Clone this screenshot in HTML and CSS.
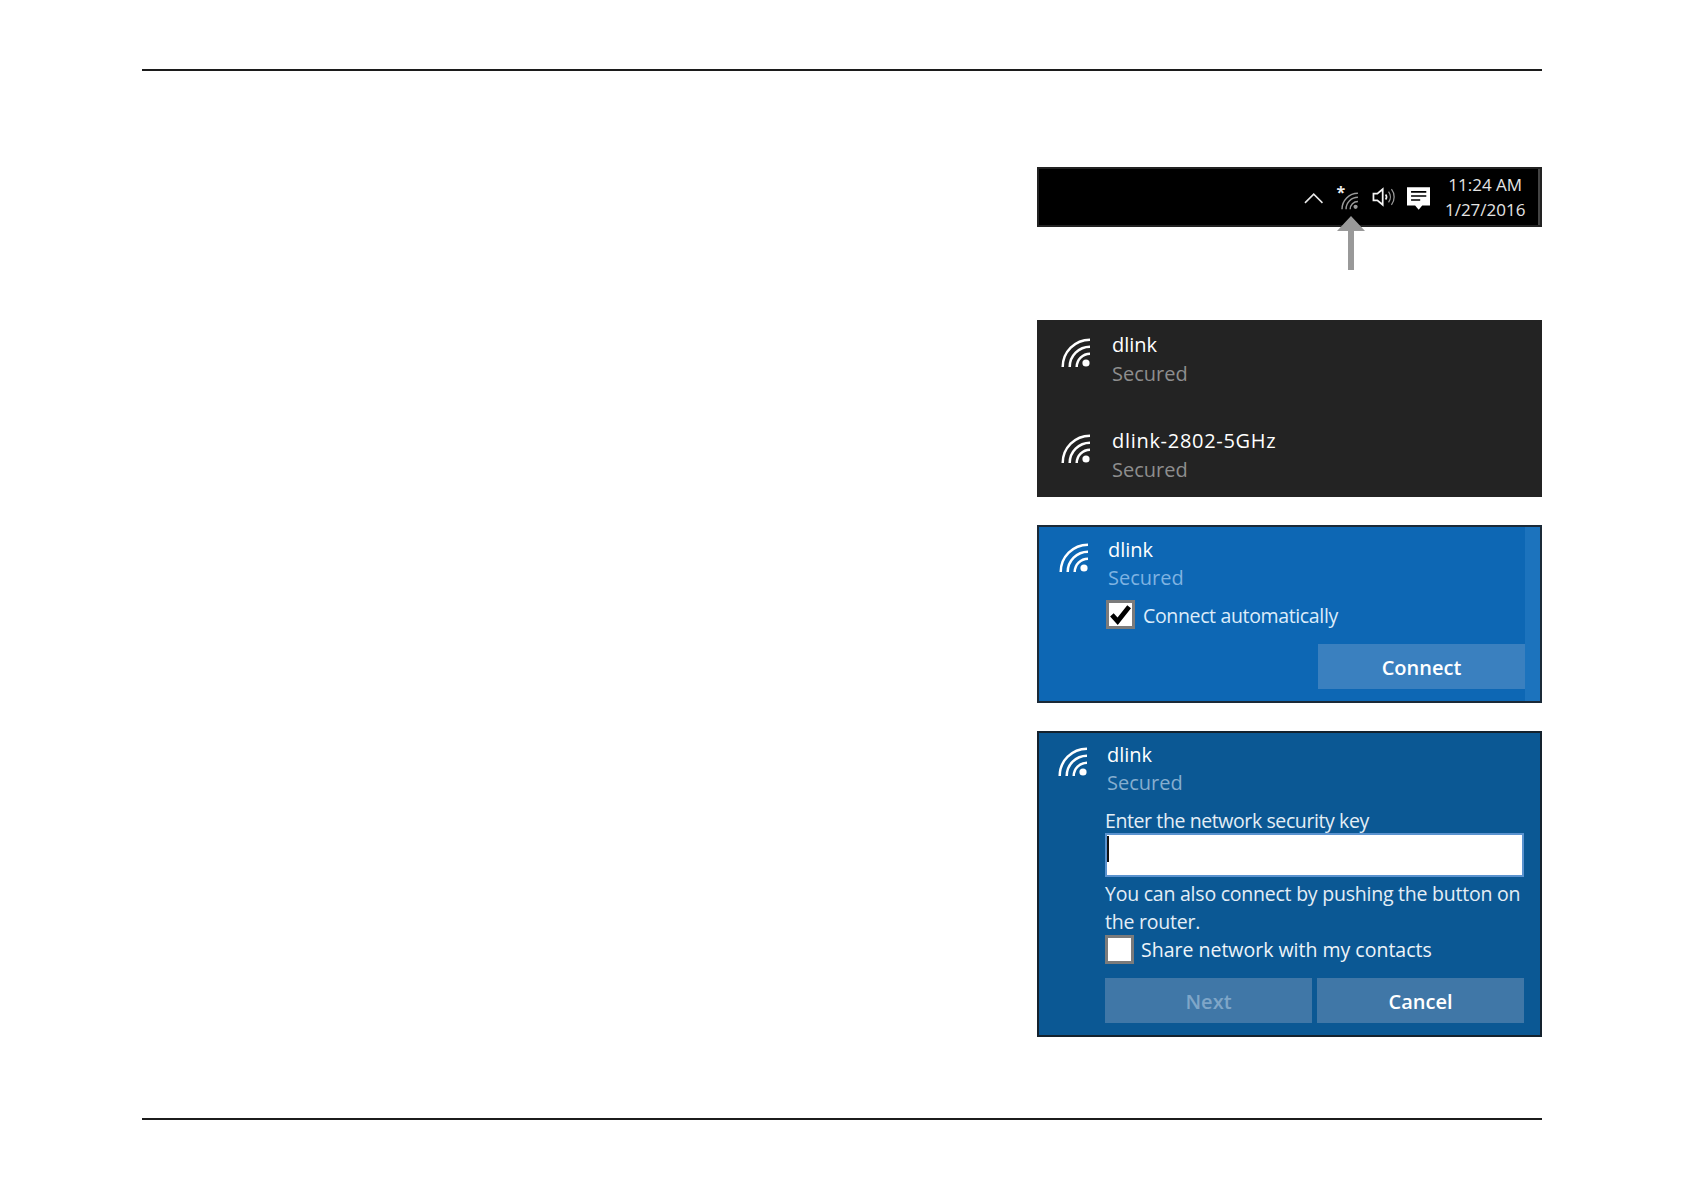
FILE: index.html
```html
<!DOCTYPE html>
<html lang="en">
<head>
<meta charset="utf-8">
<title>Wi-Fi connection steps</title>
<link rel="stylesheet" href="styles.css">
</head>
<body>
<svg class="defs" width="0" height="0" aria-hidden="true">
  <symbol id="wifi" viewBox="0 0 30 30">
    <path d="M1.7 29A27.3 27.3 0 0 1 29 1.7M8.7 29A20.3 20.3 0 0 1 29 8.7M15.7 29A13.3 13.3 0 0 1 29 15.7" fill="none" stroke="currentColor" stroke-width="2.5"/>
    <circle cx="25" cy="25" r="3.6" fill="currentColor"/>
  </symbol>
</svg>
<div class="page">
  <hr class="rule">
  <main class="stack">
    <section class="taskbar">
      <svg class="tray-chevron" viewBox="0 0 20 12"><path d="M1 11 10 2l9 9" fill="none" stroke="#e8e8e8" stroke-width="1.6"/></svg>
      <span class="tray-star">*</span>
      <svg class="tray-wifi"><use href="#wifi"/></svg>
      <svg class="tray-speaker" viewBox="0 0 24 20"><path d="M1.5 6.500h4L11 2v16l-5.500-4.500h-4z" fill="none" stroke="#f4f4f4" stroke-width="1.800"/><path d="M14 7.500a4 4 0 0 1 0 5" fill="none" stroke="#eee" stroke-width="1.700"/><path d="M17 4.500a9 9 0 0 1 0 11M20 2a13 13 0 0 1 0 16" fill="none" stroke="#999" stroke-width="1.300"/></svg>
      <svg class="tray-action" viewBox="0 0 23 23"><path d="M0 0h23v18h-8l-3.500 4-3.500-4H0z" fill="#fff"/><path d="M4 4.500h15M4 8.500h15M4 12.500h9" stroke="#000" stroke-width="1.600"/></svg>
      <div class="clock"><span>11:24 AM</span><span>1/27/2016</span></div>
      <i class="tray-edge"></i>
      <svg class="arrow" viewBox="0 0 30 54"><path d="M15 0 29 15H18V54H12V15H1z" fill="#999"/></svg>
    </section>

    <section class="panel panel-dark">
      <div class="net">
        <svg class="wifi"><use href="#wifi"/></svg>
        <div><div class="name">dlink</div><div class="status">Secured</div></div>
      </div>
      <div class="net net-second">
        <svg class="wifi"><use href="#wifi"/></svg>
        <div><div class="name name-long">dlink-2802-5GHz</div><div class="status">Secured</div></div>
      </div>
    </section>

    <section class="panel panel-blue">
      <div class="panel-main">
        <div class="net">
          <svg class="wifi"><use href="#wifi"/></svg>
          <div><div class="name">dlink</div><div class="status">Secured</div></div>
        </div>
        <div class="check-row">
          <span class="box"><svg viewBox="0 0 24 24"><path d="M3 12.500l6 6.500L21 4" fill="none" stroke="#000" stroke-width="5"/></svg></span>
          <span class="check-label">Connect automatically</span>
        </div>
        <div class="btn-row"><button class="btn">Connect</button></div>
      </div>
      <div class="strip"></div>
    </section>

    <section class="panel panel-navy">
      <div class="net">
        <svg class="wifi"><use href="#wifi"/></svg>
        <div><div class="name">dlink</div><div class="status">Secured</div></div>
      </div>
      <div class="form">
        <div class="label">Enter the network security key</div>
        <div class="input"><i class="caret"></i></div>
        <p class="hint">You can also connect by pushing the button on the router.</p>
        <div class="check-row share">
          <span class="box"></span>
          <span class="check-label">Share network with my contacts</span>
        </div>
        <div class="btn-pair">
          <button class="btn btn-off">Next</button>
          <button class="btn">Cancel</button>
        </div>
      </div>
    </section>
  </main>
  <hr class="rule rule-bottom">
</div>
</body>
</html>
```
FILE: styles.css
```css
* { box-sizing: border-box; }
html, body { margin: 0; background: #fff; }
body { font-family: "Open Sans", "Noto Sans", sans-serif; color: #fff; }
.defs { position: absolute; }
.page { margin: 0 142px; padding-top: 69px; }
.rule { margin: 0; border: 0; height: 2px; background: #1c1c1c; }
.rule-bottom { margin-top: 81px; }
.stack { width: 505px; margin: 96px 0 0 auto; display: flex; flex-direction: column; }

/* taskbar */
.taskbar { position: relative; height: 60px; margin-bottom: 93px; background: #000; border: 2px solid #222; display: flex; align-items: center; padding: 0 0 0 265px; color: #9a9a9a; }
.tray-chevron { width: 20px; height: 12px; margin-top: 2px; }
.tray-star { width: 10px; margin: -10px 0 0 13px; font-size: 16px; line-height: 20px; font-weight: 700; color: #eee; }
.tray-wifi { width: 18px; height: 18px; margin: 8px 0 0 -5px; }
.tray-speaker { width: 24px; height: 20px; margin-left: 13px; }
.tray-action { width: 24px; height: 24px; margin: 4px 0 0 12px; }
.clock { display: flex; flex-direction: column; align-items: center; width: 84px; margin-left: 14px; font-size: 17px; line-height: 25px; color: #e4e4e4; }
.tray-edge { width: 2px; height: 56px; margin-left: 12px; background: #444; }
.arrow { position: absolute; left: 297px; top: 47px; width: 30px; height: 54px; }

/* shared */
.panel { position: relative; }
.net { display: grid; grid-template-columns: 30px 1fr; }
.wifi { width: 30px; height: 30px; color: #fff; }
.name { font-size: 20px; line-height: 28px; }
.name-long { letter-spacing: .7px; }
.status { font-size: 20px; line-height: 28px; }
.check-row { display: flex; align-items: center; }
.box { width: 29px; height: 29px; flex: none; background: #fff; border: 3px solid #7b7b7b; display: flex; }
.box svg { width: 23px; height: 23px; }
.check-label { font-size: 19.500px; line-height: 29px; }
.btn { font: 600 20px/48px "Open Sans", "Noto Sans", sans-serif; height: 45px; border: 0; padding: 0; color: #fff; background: #3a80bf; }

/* dark list */
.panel-dark { height: 177px; margin-bottom: 28px; background: #232323; padding: 11px 0 0 24px; }
.panel-dark .net { column-gap: 21px; }
.panel-dark .wifi { margin-top: 7px; }
.panel-dark .status { margin-top: 1px; color: #8e8e8e; }
.panel-dark .net-second { margin-top: 39px; }

/* blue card */
.panel-blue { height: 178px; margin-bottom: 28px; background: #0d67b4; border: 2px solid #1b2a38; display: flex; }
.panel-main { flex: 1; padding: 9px 0 0 20px; }
.panel-blue .net { column-gap: 19px; }
.panel-blue .wifi { margin-top: 7px; }
.panel-blue .status { color: #7fb3e2; }
.strip { width: 15px; background: #1c73bd; }
.panel-blue .check-row { margin: 7px 0 0 47px; }
.panel-blue .check-label { margin: 2px 0 0 8px; font-size: 19.500px; letter-spacing: -.35px; color: #dcecfa; }
.btn-row { display: flex; justify-content: flex-end; margin-top: 14px; }
.btn-row .btn { width: 207px; }

/* key card */
.panel-navy { height: 306px; background: #0b5894; border: 2px solid #14222e; padding: 8px 16px 0 19px; }
.panel-navy .net { column-gap: 19px; }
.panel-navy .wifi { margin-top: 6px; }
.panel-navy .status { color: #86aecf; }
.form { margin: 13px 0 0 47px; }
.label { font-size: 19.500px; line-height: 22.500px; letter-spacing: -.4px; color: #e4eef6; }
.input { position: relative; height: 44px; background: #fff; border: 2px solid #5b93cf; }
.caret { position: absolute; left: 0; top: 1px; width: 2px; height: 26px; background: #111; }
.hint { margin: 3px 0 0; font-size: 19.500px; line-height: 28px; letter-spacing: -.23px; color: #e4eef6; }
.share { margin-top: -1px; }
.share .check-label { margin-left: 7px; color: #eef4f9; }
.btn-pair { display: grid; grid-template-columns: 207px 207px; column-gap: 5px; margin-top: 14px; }
.btn-pair .btn { background: #4077a7; }
.btn-pair .btn-off { color: #7fa6c8; }
```
